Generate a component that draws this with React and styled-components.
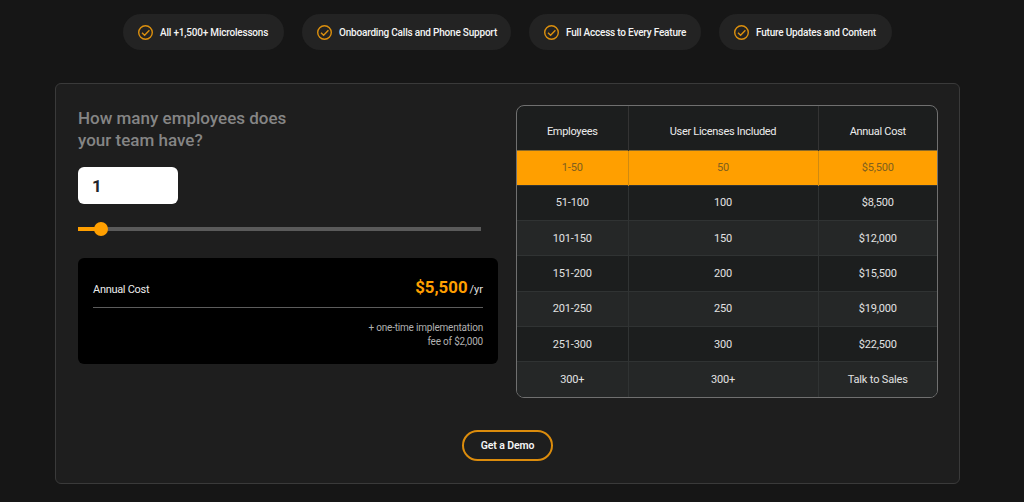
import React from "react";
import styled, { createGlobalStyle } from "styled-components";

const Global = createGlobalStyle`
  html, body { margin: 0; padding: 0; background: #161616; }
  body { font-family: Roboto, "Noto Sans", sans-serif; color: #fff; height: 502px; overflow: hidden; }
  * { box-sizing: border-box; }
`;

const Page = styled.div`
  display: flex;
  flex-direction: column;
  align-items: center;
  width: 1015px;
  padding-top: 14px;
`;
const PillRow = styled.div`
  display: flex;
  gap: 18px;
  margin-bottom: 33px;
`;
const Pill = styled.div`
  display: flex;
  align-items: center;
  gap: 7px;
  width: ${(p) => p.$w}px;
  height: 36px;
  padding-left: 15px;
  border-radius: 18px;
  background: #232323;
  font-size: 10px;
  letter-spacing: -0.2px;
  font-weight: 500;
  color: #f4f4f4;
  white-space: nowrap;
`;
const Card = styled.div`
  width: 905px;
  height: 401px;
  border: 1px solid #3a3a3a;
  border-radius: 6px;
  background: #1e1e1e;
  padding: 21px 21px 0 22px;
`;
const Columns = styled.div`
  display: flex;
  gap: 18px;
`;
const Left = styled.div`
  width: 420px;
  flex: none;
`;
const Heading = styled.h2`
  margin: 0 0 16px;
  padding-top: 2px;
  width: 240px;
  font-size: 17px;
  line-height: 22px;
  font-weight: 500;
  color: #858585;
`;
const NumberField = styled.div`
  width: 100px;
  height: 37px;
  border-radius: 6px;
  background: #fff;
  padding-left: 14px;
  display: flex;
  align-items: center;
  font-size: 17px;
  font-weight: 700;
  color: #212529;
`;
const Slider = styled.div`
  position: relative;
  width: 403px;
  height: 4px;
  margin: 23px 0 27px;
  background: #5a5a5a;
`;
const SliderFill = styled.div`
  height: 100%;
  width: 20px;
  background: #ff9f00;
`;
const SliderThumb = styled.div`
  position: absolute;
  left: 16px;
  top: -5px;
  width: 14px;
  height: 14px;
  border-radius: 50%;
  background: #ff9f00;
`;
const CostBox = styled.div`
  height: 106px;
  border-radius: 6px;
  background: #000;
  padding: 0 15px;
`;
const CostRow = styled.div`
  height: 50px;
  display: flex;
  justify-content: space-between;
  align-items: baseline;
  padding-top: 19px;
  border-bottom: 1px solid #5c5c5c;
`;
const CostLabel = styled.span`
  font-size: 11px;
  letter-spacing: -0.3px;
  color: #ececec;
`;
const CostValue = styled.span`
  font-size: 16.8px;
  font-weight: 700;
  color: #ff9f00;
`;
const CostUnit = styled.span`
  font-size: 11px;
  font-weight: 400;
  color: #e0e0e0;
  margin-left: 2px;
`;
const CostNote = styled.p`
  margin: 13px 0 0;
  text-align: right;
  font-size: 10px;
  letter-spacing: -0.2px;
  line-height: 14px;
  color: #b0b0b0;
`;
const TableFrame = styled.div`
  width: 422px;
  height: 293px;
  border: 1px solid #707070;
  border-radius: 8px;
  overflow: hidden;
  background: #1c1e1e;
`;
const Table = styled.table`
  width: 100%;
  height: 100%;
  table-layout: fixed;
  border-collapse: collapse;
`;
const HeadCell = styled.th`
  height: 44px;
  padding: 8px 0 0;
  width: ${(p) => p.$w}px;
  font-size: 11px;
  letter-spacing: -0.3px;
  font-weight: 400;
  color: #ececec;
  border-left: 1px solid #333;
  &:first-child { border-left: 0; }
`;
const Row = styled.tr`
  background: ${(p) => (p.$active ? "#ff9f00" : p.$alt ? "#252727" : "#1c1e1e")};
  color: ${(p) => (p.$active ? "#80601f" : "#e2e2e2")};
`;
const Cell = styled.td`
  padding: 0;
  height: 35.3px;
  text-align: center;
  font-size: 11px;
  letter-spacing: -0.15px;
  border-top: 1px solid ${(p) => (p.$active ? "#8a6a2a" : "#303333")};
  border-left: 1px solid ${(p) => (p.$active ? "#d08a10" : "#303333")};
  &:first-child { border-left: 0; }
`;
const ButtonRow = styled.div`
  display: flex;
  justify-content: center;
  margin-top: 32px;
  padding-right: 1px;
`;
const DemoButton = styled.button`
  width: 91px;
  height: 31px;
  border: 2px solid #dc8c0c;
  border-radius: 16px;
  background: transparent;
  color: #f5f5f5;
  font-family: inherit;
  font-size: 10.5px;
  letter-spacing: -0.1px;
  font-weight: 600;
  padding: 0;
`;
const CheckSvg = styled.svg`
  width: 15px;
  height: 15px;
  flex: none;
`;

const Check = () => (
  <CheckSvg viewBox="0 0 15 15" fill="none" stroke="#dc900e" strokeWidth="1.4">
    <circle cx="7.5" cy="7.5" r="6.8" />
    <path d="M4 7.7 6.6 10.2 11.4 5.2" />
  </CheckSvg>
);

const pills = [
  ["All +1,500+ Microlessons", 161],
  ["Onboarding Calls and Phone Support", 209],
  ["Full Access to Every Feature", 172],
  ["Future Updates and Content", 173],
];
const rows = [
  ["1-50", "50", "$5,500"],
  ["51-100", "100", "$8,500"],
  ["101-150", "150", "$12,000"],
  ["151-200", "200", "$15,500"],
  ["201-250", "250", "$19,000"],
  ["251-300", "300", "$22,500"],
  ["300+", "300+", "Talk to Sales"],
];

export default function App() {
  return (
    <Page>
      <Global />
      <PillRow>
        {pills.map(([t, w]) => (
          <Pill key={t} $w={w}>
            <Check />
            {t}
          </Pill>
        ))}
      </PillRow>
      <Card>
        <Columns>
          <Left>
            <Heading>How many employees does your team have?</Heading>
            <NumberField>1</NumberField>
            <Slider>
              <SliderFill />
              <SliderThumb />
            </Slider>
            <CostBox>
              <CostRow>
                <CostLabel>Annual Cost</CostLabel>
                <CostValue>
                  $5,500<CostUnit>/yr</CostUnit>
                </CostValue>
              </CostRow>
              <CostNote>
                + one-time implementation
                <br />
                fee of $2,000
              </CostNote>
            </CostBox>
          </Left>
          <TableFrame>
            <Table>
              <thead>
                <tr>
                  <HeadCell $w={111}>Employees</HeadCell>
                  <HeadCell $w={190}>User Licenses Included</HeadCell>
                  <HeadCell>Annual Cost</HeadCell>
                </tr>
              </thead>
              <tbody>
                {rows.map((r, i) => (
                  <Row key={r[0]} $active={i === 0} $alt={i > 0 && i % 2 === 0}>
                    {r.map((c, j) => (
                      <Cell key={j} $active={i === 0}>{c}</Cell>
                    ))}
                  </Row>
                ))}
              </tbody>
            </Table>
          </TableFrame>
        </Columns>
        <ButtonRow>
          <DemoButton>Get a Demo</DemoButton>
        </ButtonRow>
      </Card>
    </Page>
  );
}
